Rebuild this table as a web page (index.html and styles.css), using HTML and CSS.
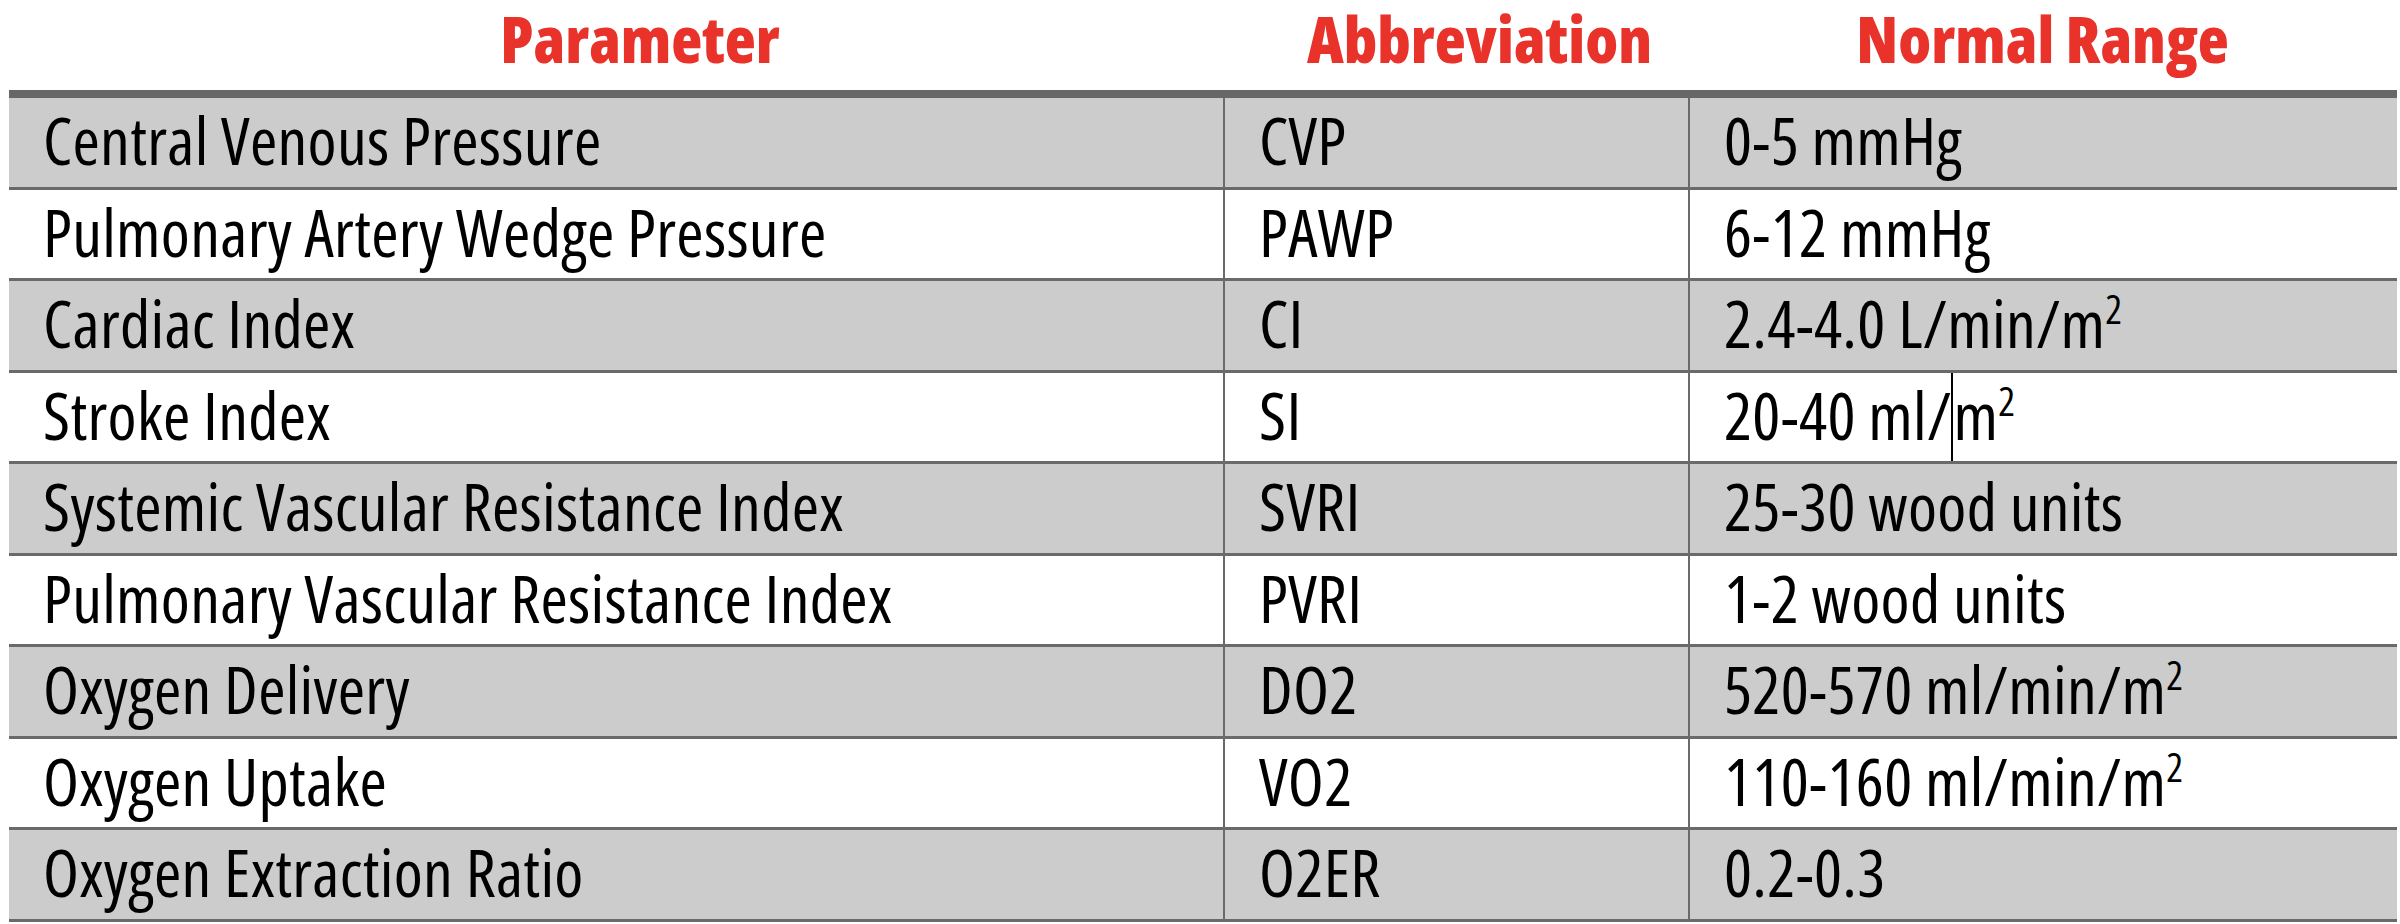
FILE: index.html
```html
<!DOCTYPE html>
<html lang="en">
<head>
<meta charset="utf-8">
<title>Hemodynamic Parameters</title>
<link rel="stylesheet" href="styles.css">
</head>
<body>
<div class="sheet">
  <div class="head">
    <div class="hcell shift">Parameter</div>
    <div class="hcell shift">Abbreviation</div>
    <div class="hcell">Normal Range</div>
  </div>
  <div class="bar"></div>
  <div class="row grey">
    <div class="cell">Central Venous Pressure</div>
    <div class="cell">CVP</div>
    <div class="cell">0-5 mmHg</div>
  </div>
  <div class="row">
    <div class="cell">Pulmonary Artery Wedge Pressure</div>
    <div class="cell">PAWP</div>
    <div class="cell">6-12 mmHg</div>
  </div>
  <div class="row grey">
    <div class="cell">Cardiac Index</div>
    <div class="cell">CI</div>
    <div class="cell">2.4-4.0 L/min/m<sup>2</sup></div>
  </div>
  <div class="row">
    <div class="cell">Stroke Index</div>
    <div class="cell">SI</div>
    <div class="cell has-caret"><span>20-40 ml/</span><span class="caret"></span><span>m<sup>2</sup></span></div>
  </div>
  <div class="row grey">
    <div class="cell">Systemic Vascular Resistance Index</div>
    <div class="cell">SVRI</div>
    <div class="cell">25-30 wood units</div>
  </div>
  <div class="row">
    <div class="cell">Pulmonary Vascular Resistance Index</div>
    <div class="cell">PVRI</div>
    <div class="cell">1-2 wood units</div>
  </div>
  <div class="row grey">
    <div class="cell">Oxygen Delivery</div>
    <div class="cell">DO2</div>
    <div class="cell">520-570 ml/min/m<sup>2</sup></div>
  </div>
  <div class="row">
    <div class="cell">Oxygen Uptake</div>
    <div class="cell">VO2</div>
    <div class="cell">110-160 ml/min/m<sup>2</sup></div>
  </div>
  <div class="row grey">
    <div class="cell">Oxygen Extraction Ratio</div>
    <div class="cell">O2ER</div>
    <div class="cell">0.2-0.3</div>
  </div>
</div>
</body>
</html>
```

FILE: styles.css
```css
html, body {
  margin: 0;
  padding: 0;
  background: #ffffff;
}

.sheet {
  margin-left: 9px;
  width: 2388px;
  font-family: "Open Sans", "DejaVu Sans Condensed", "Liberation Sans", sans-serif;
  font-stretch: 75%;
  color: #000000;
}

.head {
  display: grid;
  grid-template-columns: 1214px 465px 1fr;
  height: 90px;
  box-sizing: border-box;
  padding-top: 0;
}

.hcell {
  text-align: center;
  font-size: 64px;
  line-height: 78px;
  font-weight: 800;
  color: #e8322a;
}

.hcell.shift {
  padding-left: 48px;
}

.bar {
  height: 8px;
  background: #676767;
}

.row {
  display: grid;
  grid-template-columns: 1214px 465px 1fr;
  height: 91.5px;
  box-sizing: border-box;
  border-bottom: 3px solid #6a6a6a;
  background: #ffffff;
}

.row.grey {
  background: #cccccc;
}

.cell {
  padding-left: 34px;
  font-size: 66px;
  letter-spacing: 0.3px;
  line-height: 82px;
  white-space: pre;
}

.cell + .cell {
  border-left: 2px solid #6a6a6a;
}

.cell.has-caret {
  display: flex;
  align-items: flex-start;
}

.cell sup {
  font-size: 0.6em;
  line-height: 0;
  vertical-align: 0.6em;
}

.caret {
  align-self: stretch;
  width: 0;
  border-left: 2px solid #000000;
}
```
